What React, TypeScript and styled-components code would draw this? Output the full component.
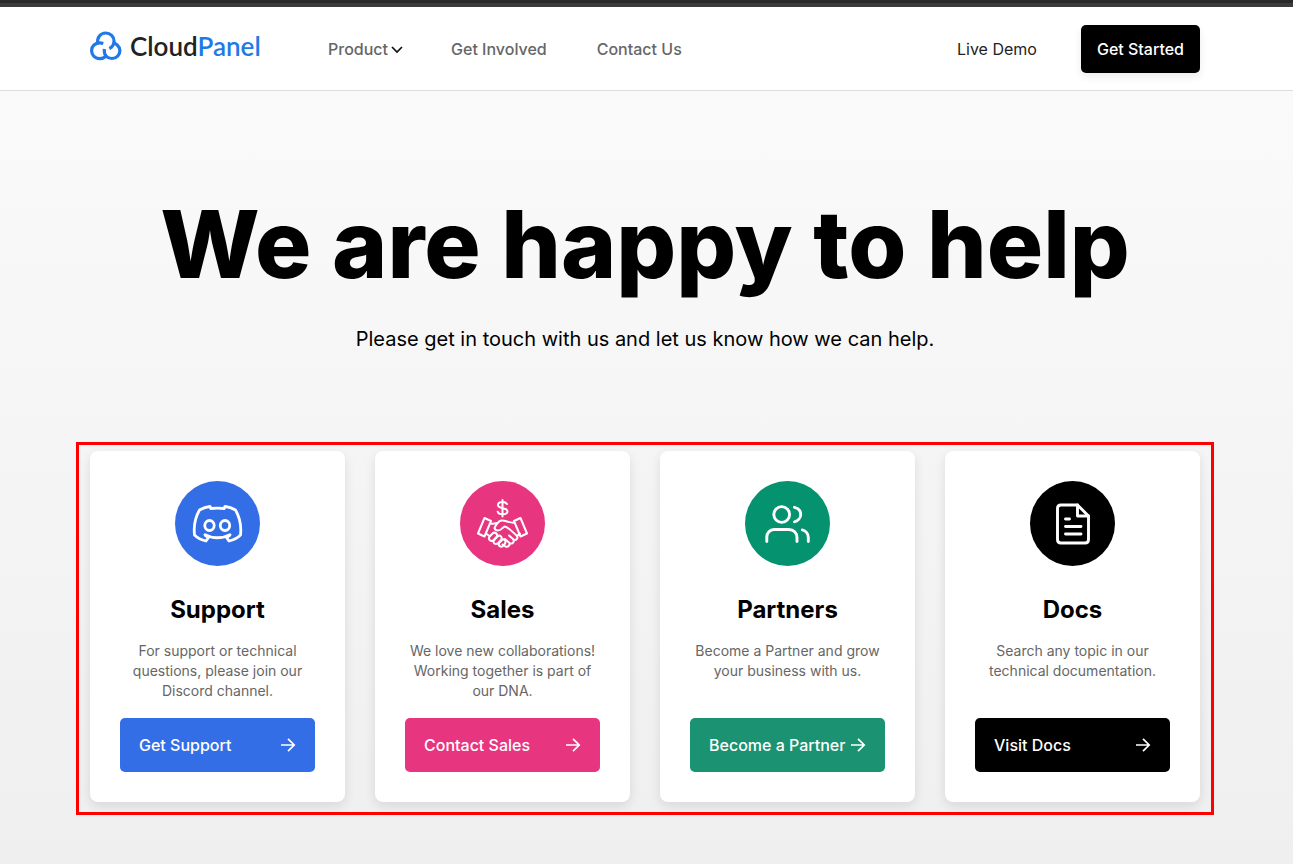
import React from 'react';
import styled, { createGlobalStyle } from 'styled-components';

const GlobalStyle = createGlobalStyle`
  * { box-sizing: border-box; }
  html { min-height: 100%; background: #efefef; }
  body {
    margin: 0;
    font-family: Inter, "Liberation Sans", sans-serif;
    font-size: 16px;
    line-height: 24px;
    color: #000;
  }
  h1, h2, p, ul { margin: 0; padding: 0; }
  a { color: inherit; text-decoration: none; }
`;

const BrowserEdge = styled.div`
  height: 7px;
  background: #3b3b3b;
  border-top: 3px solid #292929;
`;

const Header = styled.header`
  background: #fff;
  border-bottom: 1px solid #dcdcdc;
  padding: 0 18px 0 15px;
`;

const HeaderInner = styled.div`
  max-width: 1110px;
  height: 83px;
  margin: 0 auto;
  display: flex;
  align-items: center;
`;

const Logo = styled.a`
  display: flex;
  align-items: center;
  gap: 7px;
  width: 238px;
  padding-bottom: 6px;
  font-family: Lato, sans-serif;
  font-size: 26px;
  font-weight: 600;
  line-height: 32px;
  color: #222;
`;

const LogoAccent = styled.span`
  color: #1f7ae8;
`;

const Nav = styled.nav`
  display: flex;
  gap: 50px;
  margin-right: auto;
  font-weight: 500;
  color: #666;
`;

const NavButton = styled.button`
  display: flex;
  align-items: center;
  gap: 3px;
  padding: 0;
  border: 0;
  background: none;
  font: inherit;
  color: inherit;
  margin-right: -2px;
`;

const DemoLink = styled.a`
  color: #222;
  margin-right: 44px;
`;

const StartLink = styled.a`
  display: flex;
  align-items: center;
  height: 48px;
  padding: 0 16px;
  border-radius: 5px;
  background: #000;
  color: #fff;
  font-weight: 500;
  box-shadow: 0 4px 8px rgba(0, 0, 0, 0.08);
`;

const Main = styled.main`
  background: linear-gradient(#fafafa, #efefef);
  padding: 100px 18px 49px 15px;
`;

const Intro = styled.section`
  text-align: center;
`;

const Title = styled.h1`
  font-size: 94px;
  line-height: 106px;
  font-weight: 800;
`;

const Lead = styled.p`
  margin-top: 26px;
  font-size: 20px;
  line-height: 32px;
`;

const Highlight = styled.section`
  max-width: 1138px;
  margin: 87px auto 0;
  border: 3px solid #f00;
  padding: 6px 11px 10px;
`;

const Cards = styled.div`
  display: grid;
  grid-template-columns: repeat(4, 1fr);
  gap: 30px;
`;

const Card = styled.article`
  display: flex;
  flex-direction: column;
  align-items: center;
  padding: 30px;
  border-radius: 8px;
  background: #fff;
  text-align: center;
  box-shadow: 0 4px 12px rgba(0, 0, 0, 0.1);
`;

const Badge = styled.div<{ $color: string }>`
  display: grid;
  place-items: center;
  width: 85px;
  height: 85px;
  border-radius: 50%;
  background: ${(p) => p.$color};
  color: #fff;
`;

const CardTitle = styled.h2`
  margin-top: 28px;
  font-size: 24px;
  line-height: 32px;
  font-weight: 700;
`;

const CardText = styled.p`
  min-height: 60px;
  margin: 15px 0 17px;
  font-size: 14px;
  line-height: 20px;
  color: #666;
`;

const CardLink = styled.a<{ $color: string }>`
  display: flex;
  align-items: center;
  justify-content: space-between;
  align-self: stretch;
  height: 54px;
  padding: 0 19px;
  border-radius: 5px;
  background: ${(p) => p.$color};
  color: #fff;
  font-weight: 500;
  white-space: nowrap;
`;

const stroke = {
  fill: 'none',
  stroke: 'currentColor',
  strokeLinecap: 'round' as const,
  strokeLinejoin: 'round' as const,
};

const CloudMark = () => (
  <svg width="33" height="32" viewBox="0 0 33 32" fill="none" stroke="#1f7ae8" strokeWidth="3.2" aria-hidden="true">
    <path d="M7.800 13C6.800 7.500 10.500 3 15.700 3C20.500 3 24 6.700 24 11C24 14.500 22 17.300 19.300 18.500" />
    <path d="M13.300 13.500C10.500 12.600 6.500 12.900 4 15C1 17.700 .8 23 3.600 26C6.500 29.400 12.500 29.400 16 26.200C19.300 29.400 25 29.200 27.800 26C30.800 22.500 30.400 17.800 27.400 15.200C26.200 14.200 24.800 13 23.200 12.500" />
    <path d="M16.300 26.500C14.600 24.800 14 22.700 14.300 19" />
  </svg>
);

const Chevron = () => (
  <svg width="12" height="12" viewBox="0 0 12 12" strokeWidth="1.700" {...stroke} stroke="#111" strokeLinecap="butt" strokeLinejoin="miter" aria-hidden="true">
    <path d="M1 4L6 9L11 4" />
  </svg>
);

const Arrow = () => (
  <svg width="16" height="16" viewBox="0 0 16 16" strokeWidth="1.700" {...stroke} strokeLinecap="butt" strokeLinejoin="miter" aria-hidden="true">
    <path d="M1 8H14.200M8 1.800L14.200 8L8 14.200" />
  </svg>
);

const DiscordIcon = () => (
  <svg width="85" height="85" viewBox="0 0 85 85" strokeWidth="2.800" {...stroke} aria-hidden="true">
    <path d="M36 27.500L35 25.500C31 26 27.500 27.300 24.500 29C20.500 36 18.500 45 19.500 54C22.500 57 26.500 59 31 60L33.500 56.500L30.500 54.500" />
    <path d="M49 27.500L50 25.500C54 26 57.500 27.300 60.500 29C64.500 36 66.500 45 65.500 54C62.500 57 58.500 59 54 60L51.500 56.500L54.500 54.500" />
    <path d="M36 27.500C40.300 26.900 44.700 26.900 49 27.500M30 53.800C37 57.700 48 57.700 55 53.800" />
    <ellipse cx="34.500" cy="44.500" rx="4.700" ry="5" />
    <ellipse cx="50" cy="44.500" rx="4.700" ry="5" />
  </svg>
);

const HandshakeIcon = () => (
  <svg width="85" height="85" viewBox="0 0 85 85" strokeWidth="2" {...stroke} aria-hidden="true">
    <path d="M47 23C46 21.300 44.500 21 42.500 21C39.500 21 38 22.300 38 24C38 28.600 47.500 25.800 47.500 30.300C47.500 32.300 45.500 33.300 42.500 33.300C40 33.300 38.300 32.500 37.700 30.700M42.500 19V35.500" />
    <path d="M24.500 37L31 40L24.500 55.500L18 52.500ZM60.500 37L54 40L60.500 55.500L67 52.500Z" />
    <path d="M30.500 42.500C33 43 35 42.500 36.500 42M54.500 41.500C49.500 42.500 44.500 38.500 40.500 39.800C38.500 40.500 35.500 44.500 34.500 47C35.500 50.500 40 50 42 47.500L44.500 45.500C48.500 46 53 51.500 56.500 54.500C58.800 57 56 60 53.500 58.500L49 54.500" />
    <path d="M53.500 58.500C54.500 61.500 52 63.500 49.500 62L45 58M49.500 62C50 64.500 48 66.500 45.500 65.500L42.500 63.500M57.500 54.500L60 52.500M26 52.500L29.500 55" />
    <path d="M32.500 52.500L29.700 55.500C27.500 58.200 31 61.500 33.700 59L36.500 56C38.500 53.300 35 50.200 32.500 52.500Z" />
    <path d="M37.500 55.500L34.200 59C32 61.800 35.500 64.500 38.200 62L41 59C43 56.200 40 53.300 37.500 55.500Z" />
    <path d="M42 59L39.300 61.800C37.500 64.500 40.700 67 43.300 64.700L45 62.700C46.500 60 44 57.300 42 59Z" />
  </svg>
);

const PeopleIcon = () => (
  <svg width="85" height="85" viewBox="0 0 85 85" strokeWidth="2.900" {...stroke} aria-hidden="true">
    <circle cx="36.700" cy="33.500" r="7.900" />
    <path d="M21.800 60.500V56C21.800 52 25 48.500 29 48.500H44C48.500 48.500 52 52 52 56.500V60.500" />
    <path d="M49.500 26.300C53 27.200 55.700 30 55.700 33.500C55.700 37 53 39.900 49.500 40.800" />
    <path d="M57.300 48.900C60.800 49.800 63.300 53 63.300 56.500V60.500" />
  </svg>
);

const DocIcon = () => (
  <svg width="85" height="85" viewBox="0 0 85 85" strokeWidth="2.900" {...stroke} aria-hidden="true">
    <path d="M47.500 24H31C28.800 24 27.500 25.300 27.500 27.500V58.500C27.500 60.700 28.800 62 31 62H55C57.200 62 58.500 60.700 58.500 58.500V35Z" />
    <path d="M47.500 24V35H58.500M35.500 38H39.500M35.500 45.500H51M35.500 53H51" />
  </svg>
);

const topics = [
  { title: 'Support', text: 'For support or technical questions, please join our Discord channel.', action: 'Get Support', color: '#336ee6', button: '#336ee6', Icon: DiscordIcon },
  { title: 'Sales', text: 'We love new collaborations! Working together is part of our DNA.', action: 'Contact Sales', color: '#e8357f', button: '#e8357f', Icon: HandshakeIcon },
  { title: 'Partners', text: 'Become a Partner and grow your business with us.', action: 'Become a Partner', color: '#04926f', button: '#1b9271', Icon: PeopleIcon },
  { title: 'Docs', text: 'Search any topic in our technical documentation.', action: 'Visit Docs', color: '#000', button: '#000', Icon: DocIcon },
];

export default function App() {
  return (
    <>
      <GlobalStyle />
      <BrowserEdge />
      <Header>
        <HeaderInner>
          <Logo href="#">
            <CloudMark />
            <span>Cloud<LogoAccent>Panel</LogoAccent></span>
          </Logo>
          <Nav>
            <NavButton type="button">Product <Chevron /></NavButton>
            <a href="#involved">Get Involved</a>
            <a href="#contact">Contact Us</a>
          </Nav>
          <DemoLink href="#demo">Live Demo</DemoLink>
          <StartLink href="#start">Get Started</StartLink>
        </HeaderInner>
      </Header>
      <Main>
        <Intro>
          <Title>We are happy to help</Title>
          <Lead>Please get in touch with us and let us know how we can help.</Lead>
        </Intro>
        <Highlight>
          <Cards>
            {topics.map(({ title, text, action, color, button, Icon }) => (
              <Card key={title}>
                <Badge $color={color}><Icon /></Badge>
                <CardTitle>{title}</CardTitle>
                <CardText>{text}</CardText>
                <CardLink href={`#${title.toLowerCase()}`} $color={button}>
                  {action}
                  <Arrow />
                </CardLink>
              </Card>
            ))}
          </Cards>
        </Highlight>
      </Main>
    </>
  );
}
